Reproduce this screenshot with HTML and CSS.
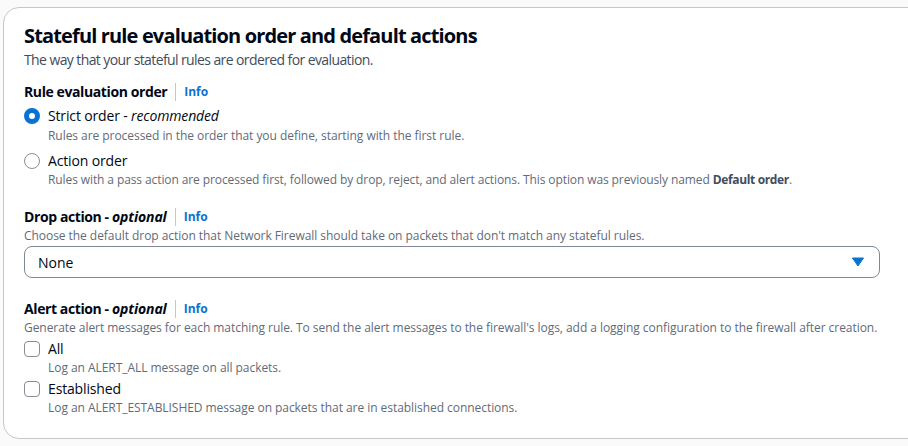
FILE: index.html
```html
<!DOCTYPE html>
<html>
<head>
<meta charset="utf-8">
<link rel="stylesheet" href="styles.css">
</head>
<body>
<div class="page">
  <div class="card">
    <h2 class="title">Stateful rule evaluation order and default actions</h2>
    <p class="subtitle">The way that your stateful rules are ordered for evaluation.</p>

    <div class="label first"><span>Rule evaluation order</span><span class="sep"></span><a class="info">Info</a></div>
    <div class="option">
      <span class="radio checked"></span><span class="opt-text">Strict order - <i>recommended</i></span>
    </div>
    <div class="desc d1">Rules are processed in the order that you define, starting with the first rule.</div>
    <div class="option next">
      <span class="radio"></span><span class="opt-text">Action order</span>
    </div>
    <div class="desc d2">Rules with a pass action are processed first, followed by drop, reject, and alert actions. This option was previously named <b>Default order</b>.</div>

    <div class="label section"><span>Drop action - <i>optional</i></span><span class="sep"></span><a class="info">Info</a></div>
    <div class="desc">Choose the default drop action that Network Firewall should take on packets that don't match any stateful rules.</div>
    <div class="select">
      <span class="select-value">None</span>
      <svg class="caret" width="12" height="10" viewBox="0 0 12 10"><path d="M0.5 1 L11.5 1 L6 9 Z" fill="#0972d3" stroke="#0972d3" stroke-width="1" stroke-linejoin="round"/></svg>
    </div>

    <div class="label section2"><span>Alert action - <i>optional</i></span><span class="sep"></span><a class="info">Info</a></div>
    <div class="desc">Generate alert messages for each matching rule. To send the alert messages to the firewall's logs, add a logging configuration to the firewall after creation.</div>
    <div class="option cb-first">
      <span class="checkbox"></span><span class="opt-text">All</span>
    </div>
    <div class="desc d3">Log an ALERT_ALL message on all packets.</div>
    <div class="option cb-next">
      <span class="checkbox"></span><span class="opt-text">Established</span>
    </div>
    <div class="desc d3">Log an ALERT_ESTABLISHED message on packets that are in established connections.</div>
  </div>
</div>
</body>
</html>
```
FILE: styles.css
```css
html, body {
  margin: 0;
  padding: 0;
  background: #fafafa;
  font-family: "Open Sans", "Noto Sans", sans-serif;
  color: #000716;
}
.page {
  padding: 7px 0 0 3px;
  overflow: hidden;
  height: 439px;
}
.card {
  background: #ffffff;
  border: 1px solid #c6c6cd;
  border-radius: 16px;
  width: 940px;
  box-sizing: border-box;
  padding: 16px 20px 22px 20px;
}
.title {
  margin: 0;
  font-size: 20px;
  line-height: 24px;
  font-weight: 700;
  letter-spacing: -0.85px;
}
.subtitle {
  margin: 2px 0 0 0;
  font-size: 14px;
  line-height: 20px;
  color: #414d5c;
  letter-spacing: -0.6px;
}
.label {
  display: flex;
  align-items: center;
  font-size: 14px;
  line-height: 22px;
  font-weight: 700;
  height: 22px;
  letter-spacing: -0.4px;
}
.label i { letter-spacing: -0.1px; }
.label.first { margin-top: 11px; }
.label.section { margin-top: 18px; }
.label.section2 { margin-top: 20px; }
.sep {
  width: 1px;
  height: 18px;
  background: #c6c6cd;
  margin: 0 8px 0 8px;
}
.info {
  color: #0972d3;
  font-size: 12px;
  font-weight: 700;
  letter-spacing: 0;
}
.option {
  display: flex;
  align-items: center;
  height: 20px;
  margin-top: 3px;
  font-size: 14px;
  line-height: 20px;
  letter-spacing: -0.15px;
}
.option.next { margin-top: 7px; }
.option.cb-first { margin-top: 3px; }
.option.cb-next { margin-top: 3px; }
.opt-text { margin-left: 8px; }
.radio {
  width: 16px;
  height: 16px;
  box-sizing: border-box;
  border-radius: 50%;
  border: 1.5px solid #8c8c94;
  flex: none;
}
.radio.checked {
  border: 5px solid #0972d3;
}
.checkbox {
  width: 16px;
  height: 16px;
  box-sizing: border-box;
  border-radius: 4px;
  border: 1.5px solid #8c8c94;
  flex: none;
}
.desc {
  font-size: 12px;
  line-height: 16px;
  color: #5f6b7a;
  padding-left: 24px;
  letter-spacing: -0.05px;
}
.desc.d1 { margin-top: 2px; }
.desc.d2 { margin-top: 1px; letter-spacing: -0.1px; }
.desc.d3 { margin-top: 1px; }
.label + .desc { padding-left: 0; }
.desc b { color: #414d5c; letter-spacing: -0.35px; }
.select {
  margin-top: 2px;
  width: 856px;
  height: 32px;
  box-sizing: border-box;
  border: 1px solid #7d8998;
  border-radius: 8px;
  display: flex;
  align-items: center;
  justify-content: space-between;
  padding: 0 15px 0 13px;
  font-size: 14px;
}
.caret { display: block; }
```
